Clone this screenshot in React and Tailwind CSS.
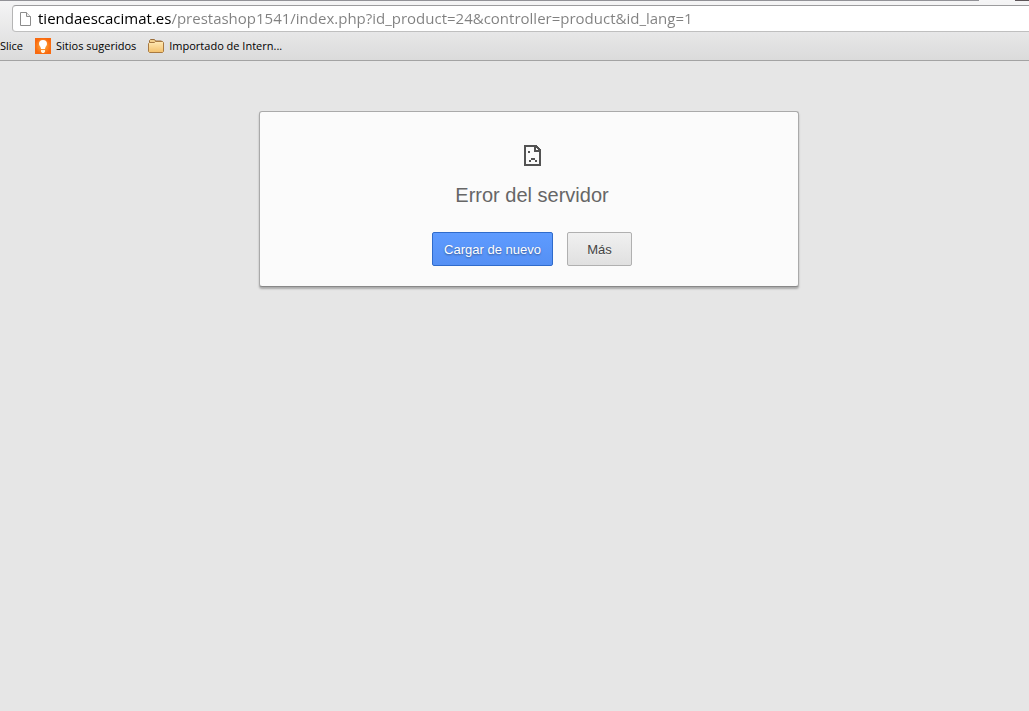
const PageIcon = () => (
  <svg width="13" height="16" viewBox="0 0 13 16" className="shrink-0" aria-hidden="true">
    <path d="M1.500 1.500h6l4 4v9h-10z" fill="#fff" stroke="#8c8c8c" strokeLinejoin="round" />
    <path d="M7.500 1.500v4h4" fill="#eee" stroke="#8c8c8c" />
  </svg>
)

const BulbIcon = () => (
  <svg width="16" height="16" viewBox="0 0 16 16" className="shrink-0" aria-hidden="true">
    <defs>
      <radialGradient id="glow">
        <stop offset="0" stopColor="#ffb648" />
        <stop offset="1" stopColor="#f9690e" />
      </radialGradient>
    </defs>
    <rect width="16" height="16" fill="url(#glow)" />
    <path d="M8 2a4 4 0 0 0-4 4c0 2 2 2.600 2 5h4c0-2.400 2-3 2-5a4 4 0 0 0-4-4z" fill="#fff" />
    <path d="M6 12h4v1.500l-1 1.500h-2l-1-1.500z" fill="#fff3dc" />
  </svg>
)

const FolderIcon = () => (
  <svg width="16" height="14" viewBox="0 0 16 14" className="shrink-0" aria-hidden="true">
    <defs>
      <linearGradient id="folder" x1="0" y1="0" x2="0" y2="1">
        <stop offset="0" stopColor="#ffe9b5" />
        <stop offset="1" stopColor="#f3c06b" />
      </linearGradient>
    </defs>
    <path d="M1.500 12.500v-11l1-1h4l1 1.500h6l1 1v9.500z" fill="#f2cf8d" stroke="#9a6e3c" />
    <path d="M.5 4.500l1-1h5l1-1h7l1 1v9l-1 1h-13l-1-1z" fill="url(#folder)" stroke="#a87a42" />
  </svg>
)

const SadPageIcon = () => (
  <svg width="17" height="21" viewBox="0 0 17 21" shapeRendering="crispEdges" fill="#535353" aria-hidden="true">
    <path d="M0 0h12v2h-10v17h13v-12h2v14h-17z" />
    <path d="M10 0h2v5h5v2h-7z" />
    <path d="M12 0h1v1h1v1h1v1h1v1h1v3h-2v-2h-1v-1h-1v-1h-1z" />
    <path d="M4 6h2v2h-2z" />
    <path d="M7 13h4v2h-4z" />
    <path d="M5 15h2v2h-2zM11 15h2v2h-2z" />
  </svg>
)

const bookmarks = [
  { label: "Slice" },
  { label: "Sitios sugeridos", icon: BulbIcon },
  { label: "Importado de Intern...", icon: FolderIcon },
]

const Toolbar = () => (
  <header className="border-b border-[#a3a3a3] bg-linear-to-b from-[#f5f5f6] to-[#dbdbdb] font-['Open_Sans','Noto_Sans',sans-serif]">
    {/* Edge of the tab strip */}
    <div className="flex h-px bg-[#929297]">
      <div className="flex-1" />
      <div className="w-9 bg-[#f5f5f6]" />
      <div className="w-[14px] bg-[#5c5457]" />
    </div>

    <div className="pt-1 pl-3">
      <label className="flex h-[27px] items-center gap-1 rounded-l-sm border border-r-0 border-t-[#9c9c9e] border-b-[#bfbfbf] border-l-[#b5b5b5] bg-white pl-[6px]">
        <PageIcon />
        {/* The host name is dark, the rest of the address is grey */}
        <input
          type="text"
          aria-label="Dirección"
          spellCheck={false}
          defaultValue="tiendaescacimat.es/prestashop1541/index.php?id_product=24&controller=product&id_lang=1"
          className="min-w-0 flex-1 bg-[linear-gradient(to_right,#000_135px,#808080_135px)] bg-clip-text pb-[2px] pl-[2px] text-[15px] leading-[22px] text-transparent outline-none"
        />
      </label>
    </div>

    <nav className="flex h-7 items-center gap-3 text-[11px] text-black">
      {bookmarks.map(({ label, icon: Icon }) => (
        <a key={label} href="#" className="flex items-center gap-[5px] whitespace-nowrap">
          {Icon && <Icon />}
          {label}
        </a>
      ))}
    </nav>
  </header>
)

const App = () => (
  <div className="flex min-h-screen flex-col bg-[#e6e6e6]">
    <Toolbar />

    <main className="flex flex-1 items-start justify-center pt-[50px] pl-[29px] font-['Liberation_Sans',Arial,sans-serif]">
      <section className="flex w-[540px] flex-col items-center rounded-[3px] border border-[#aaa] border-b-[#888] bg-[#fbfbfb] pt-[33px] pb-5 pl-[6px] shadow-[0_2px_2px_#aaa]">
        <SadPageIcon />
        <h1 className="mt-[17px] text-xl leading-6 text-[#666]">Error del servidor</h1>
        <div className="mt-[25px] flex gap-[14px] text-[13px]">
          <button
            type="button"
            className="h-[34px] w-[121px] rounded-xs border border-[#2f6bcb] bg-linear-to-b from-[#5e9bff] to-[#5590f4] pt-px text-white [text-shadow:0_1px_2px_#0006]"
          >
            Cargar de nuevo
          </button>
          <button
            type="button"
            className="h-[34px] w-[65px] rounded-xs border border-[#b0b0b0] bg-linear-to-b from-[#f0f0f0] to-[#e0e0e0] pt-px text-[#444] [text-shadow:0_1px_0_#f0f0f0]"
          >
            Más
          </button>
        </div>
      </section>
    </main>
  </div>
)

export default App
